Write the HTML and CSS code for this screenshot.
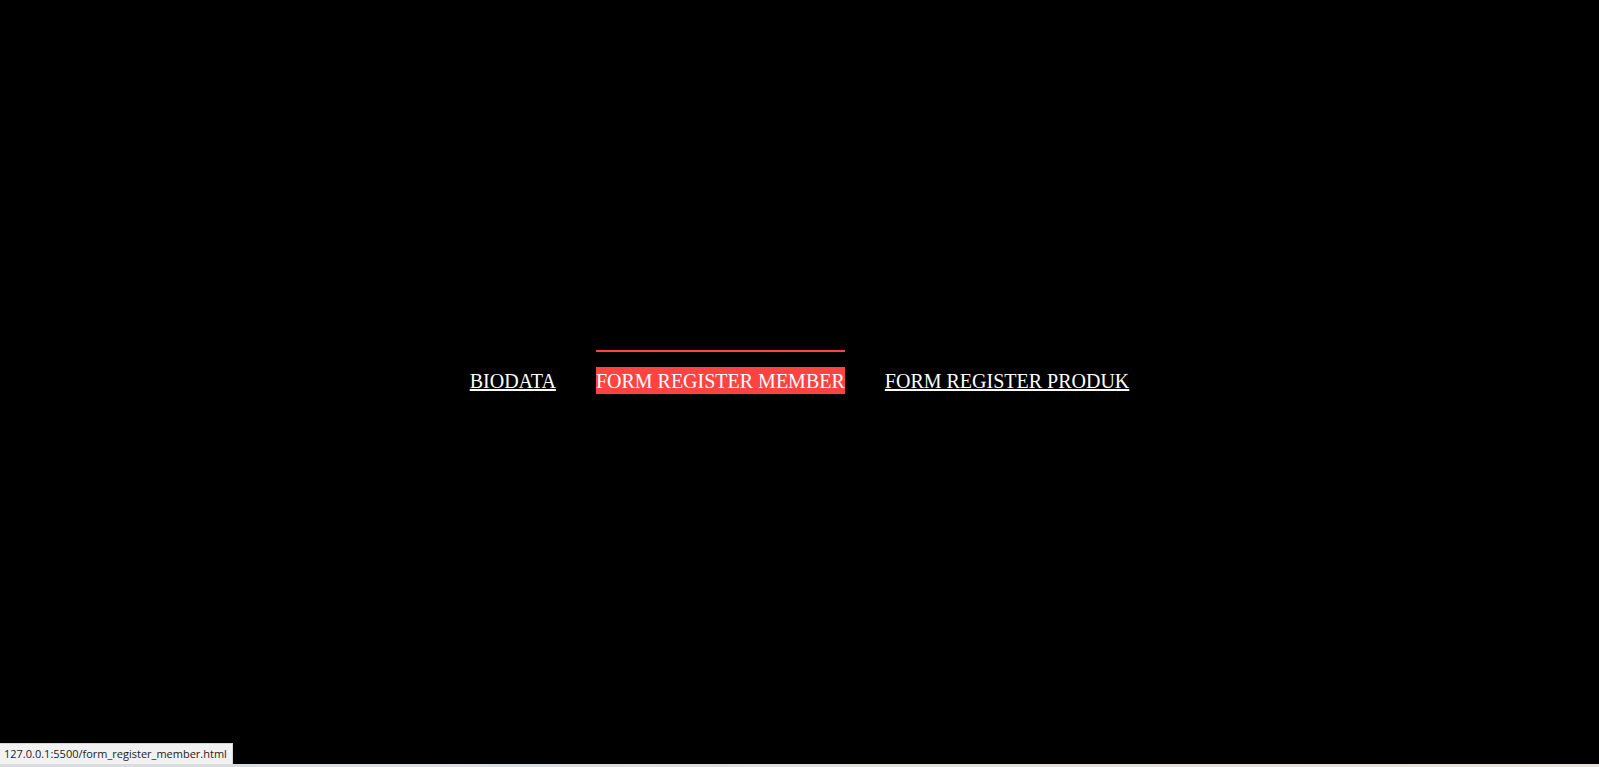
FILE: index.html
```html
<!DOCTYPE html>
<html lang="id">
<head>
<meta charset="utf-8">
<title>Form Register Member</title>
<link rel="stylesheet" href="styles.css">
</head>
<body>
<main class="page">
  <nav class="nav">
    <ul class="nav-list">
      <li class="nav-item"><a class="nav-link" href="#">BIODATA</a></li>
      <li class="nav-item nav-item-active"><a class="nav-link nav-link-active" href="#">FORM REGISTER MEMBER</a></li>
      <li class="nav-item"><a class="nav-link" href="#">FORM REGISTER PRODUK</a></li>
    </ul>
  </nav>
</main>
<div class="status-bar">127.0.0.1:5500/form_register_member.html</div>
<div class="bottom-edge"></div>
</body>
</html>
```
FILE: styles.css
```css
html, body {
  margin: 0;
  padding: 0;
  background: #000;
  height: 100%;
  overflow: hidden;
}

.page {
  padding-top: 350px;
  font-family: "Liberation Serif", "Times New Roman", serif;
  font-size: 20px;
}

.nav-list {
  list-style: none;
  margin: 0;
  padding: 0;
  display: flex;
  justify-content: center;
  gap: 40px;
}

.nav-item {
  border-top: 2px solid transparent;
  padding-top: 18px;
}

.nav-item-active {
  border-top-color: #ff4242;
}

.nav-link {
  color: #fff;
  text-decoration: underline;
  padding: 3px 0 2px;
}

.nav-link-active {
  background: #ff4242;
  text-decoration: none;
}

.status-bar {
  position: fixed;
  left: 0;
  bottom: 3px;
  height: 21px;
  width: max-content;
  box-sizing: border-box;
  background: #f2f2f2;
  border-top: 1px solid #d6d6d6;
  border-right: 1px solid #d6d6d6;
  color: #222;
  font-family: "Open Sans", "Noto Sans", sans-serif;
  font-size: 11px;
  line-height: 20px;
  padding: 0 5px 0 4px;
  white-space: nowrap;
}

.bottom-edge {
  position: fixed;
  left: 0;
  right: 0;
  bottom: 0;
  height: 3px;
  background: linear-gradient(90deg, #d9dbe0, #e4e2dc);
}
```
